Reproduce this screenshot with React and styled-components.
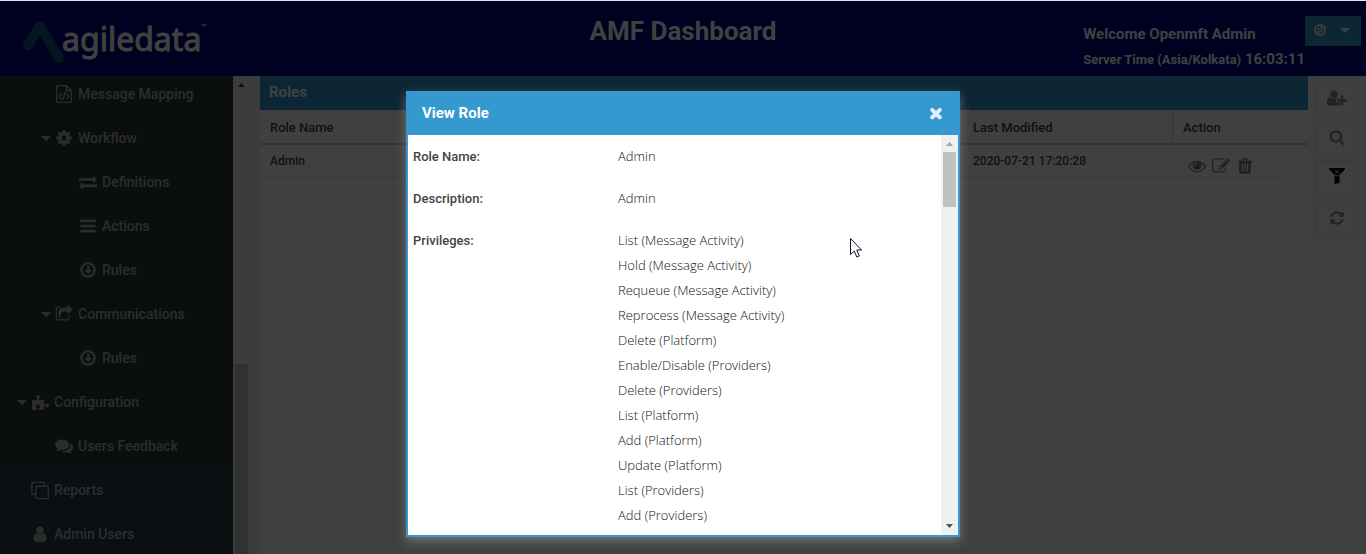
import React from "react";
import styled, { createGlobalStyle } from "styled-components";
import { FaPuzzlePiece } from "react-icons/fa";

const Global = createGlobalStyle`
  * { box-sizing: border-box; }
  body { margin: 0; font-family: Roboto, "Liberation Sans", sans-serif; background: #fff; }
  ul, dl, dd { margin: 0; padding: 0; list-style: none; }
`;

const Page = styled.div`
  display: flex;
  flex-direction: column;
  height: 100vh;
  overflow: hidden;
  position: relative;
  border-top: 1px solid #dde6ea;
`;

const Header = styled.header`
  display: grid;
  grid-template-columns: 1fr auto 1fr;
  flex: none;
  height: 75px;
  background: #000080;
  color: #fff;
`;

const Brand = styled.a`
  display: flex;
  align-items: flex-start;
  padding: 12px 0 0 23px;
  color: #fff;
  text-decoration: none;
  font-family: "Noto Sans", sans-serif;
  font-size: 32px;
  line-height: 52px;
`;

const BrandMark = styled.svg`
  width: 42px;
  height: 44px;
  margin: 7px -3px 0 0;
`;

const BrandName = styled.span`
  -webkit-text-stroke: 1px currentColor;
`;

const Trade = styled.sup`
  font-size: 7px;
  line-height: 27px;
`;

const Title = styled.h1`
  margin: 0;
  font-size: 26px;
  font-weight: 700;
  line-height: 61px;
`;

const Account = styled.div`
  display: flex;
  justify-content: flex-end;
  align-items: flex-start;
  padding: 15px 5px 0 0;
`;

const Greeting = styled.div`
  padding-top: 6px;
  font-size: 15px;
  font-weight: 700;
  line-height: 25px;
`;

const Zone = styled.small`
  font-size: 13px;
`;

const AccountButton = styled.button`
  display: flex;
  align-items: center;
  justify-content: space-between;
  width: 56px;
  height: 30px;
  padding: 0 11px 2px 9px;
  border: 0;
  color: #fff;
  background: #3598cf;
`;

const Main = styled.div`
  display: flex;
  flex: 1;
  min-height: 0;
  background: #f0f0f0;
`;

const Sidebar = styled.nav`
  flex: none;
  width: 233px;
  overflow: hidden;
  background: #28383f;
`;

const Menu = styled.ul`
  margin-top: -4px;
`;

const MenuItem = styled.li`
  background: ${(p) => (p.$alt ? "#2b3e48" : "transparent")};
`;

const MenuLink = styled.a`
  display: flex;
  align-items: center;
  height: 44px;
  padding-left: ${(p) => 17 + p.$level * 24}px;
  font-size: 14px;
  font-weight: 500;
  color: #b0b0b0;
  text-decoration: none;
`;

const CaretSlot = styled.span`
  display: flex;
  width: 14px;
`;

const IconSlot = styled.span`
  display: flex;
  justify-content: center;
  width: 18px;
  margin-right: 5px;
`;

const SideScroll = styled.div`
  display: flex;
  flex-direction: column;
  align-items: center;
  justify-content: space-between;
  flex: none;
  width: 17px;
  padding-top: 7px;
  color: #404040;
`;

const SideThumb = styled.div`
  width: 13px;
  height: 190px;
  background: #c1c1c1;
`;

const Content = styled.main`
  flex: 1;
  min-width: 0;
  margin-left: 10px;
  background: #fff;
`;

const PanelTitle = styled.h2`
  margin: 0;
  padding-left: 9px;
  height: 34px;
  font-size: 15px;
  font-weight: 700;
  line-height: 32px;
  color: #fff;
  background: #3598cf;
`;

const Table = styled.table`
  width: 100%;
  border-collapse: separate;
  border-spacing: 0;
  table-layout: fixed;
  color: #444;
`;

const Th = styled.th`
  width: ${(p) => p.$width || "auto"};
  height: 35px;
  padding: 1px 10px 0;
  text-align: left;
  font-size: 13px;
  font-weight: 500;
  border-bottom: 2px solid #d0d0d0;
  border-left: ${(p) => (p.$divider ? "1px solid #d0d0d0" : "0")};
`;

const Td = styled.td`
  height: 33px;
  padding: 0 10px 1px ${(p) => (p.$inset ? 11 : 10)}px;
  font-size: 12px;
  font-weight: 500;
  border-bottom: ${(p) => (p.$blank ? "0" : "1px solid #ddd")};
`;

const RowActions = styled.div`
  display: flex;
  gap: 6px;
  padding: 10px 0 0 5px;
`;

const IconButton = styled.button`
  display: flex;
  padding: 0;
  border: 0;
  background: none;
  color: #808080;
`;

const Tools = styled.div`
  display: flex;
  flex-direction: column;
  flex: none;
  gap: 6px;
  width: 58px;
  padding: 6px 8px;
  background: #fcfcfc;
`;

const ToolButton = styled.button`
  display: flex;
  align-items: center;
  justify-content: center;
  height: ${(p) => (p.$tall ? 36 : 33)}px;
  padding: 0 0 ${(p) => (p.$tall ? 4 : 1)}px;
  border: 1px solid #e4e4e4;
  background: #fcfcfc;
  color: ${(p) => (p.$tall ? "#000" : "#888")};
`;

const Backdrop = styled.div`
  position: absolute;
  inset: 0;
  display: flex;
  justify-content: center;
  align-items: flex-start;
  padding: 90px 16px 17px;
  background: rgba(0, 0, 0, 0.75);
`;

const Dialog = styled.section`
  display: flex;
  flex-direction: column;
  width: 554px;
  max-height: 100%;
  border: 2px solid #3598cf;
  border-top: 0;
  background: #fff;
  box-shadow: 0 4px 10px rgba(170, 170, 170, 0.5);
`;

const DialogHead = styled.header`
  display: flex;
  align-items: center;
  justify-content: space-between;
  flex: none;
  height: 44px;
  padding: 0 13px 0 14px;
  color: #fff;
  background: #3598cf;
`;

const DialogTitle = styled.h2`
  margin: 0;
  font-size: 15px;
  font-weight: 700;
`;

const CloseButton = styled(IconButton)`
  color: #dceef9;
`;

const DialogBody = styled.div`
  display: flex;
  flex: 1;
  min-height: 0;
`;

const Fields = styled.dl`
  flex: 1;
  padding: 9px 5px 0;
  overflow: hidden;
  color: #444;
`;

const Field = styled.div`
  display: grid;
  grid-template-columns: 205px 1fr;
  margin-bottom: 17px;
  font-size: 13px;
  line-height: 25px;
`;

const Name = styled.dt`
  font-weight: 500;
`;

const Value = styled.dd`
  font-family: "Open Sans", sans-serif;
  font-weight: 300;
  color: #111;
`;

const DialogScroll = styled.div`
  display: flex;
  flex-direction: column;
  align-items: center;
  justify-content: space-between;
  width: 17px;
  padding: 7px 0;
  background: #f0f0f0;
  color: #505050;
`;

const ScrollStart = styled.span`
  display: flex;
  color: #a3a3a3;
`;

const DialogThumb = styled.div`
  width: 13px;
  height: 55px;
  margin: 6px 0 auto;
  background: #c1c1c1;
`;

const Pointer = styled.svg`
  position: absolute;
  left: 849px;
  top: 236px;
  width: 14px;
  height: 22px;
`;

const paths = {
  cog: "M1152 896q0-106-75-181t-181-75-181 75-75 181 75 181 181 75 181-75 75-181zm512-109v222q0 12-8 23t-20 13l-185 28q-19 54-39 91 35 50 107 138 10 12 10 25t-9 23q-27 37-99 108t-94 71q-12 0-26-9l-138-108q-44 23-91 38-16 136-29 186-7 28-36 28h-222q-14 0-24.5-8.5t-11.5-21.5l-28-184q-49-16-90-37l-141 107q-10 9-25 9-14 0-25-11-126-114-165-168-7-10-7-23 0-12 8-23 15-21 51-66.5t54-70.5q-27-50-41-99l-183-27q-13-2-21-12.5t-8-23.5v-222q0-12 8-23t19-13l186-28q14-46 39-92-40-57-107-138-10-12-10-24 0-10 9-23 26-36 98.5-107.5t94.5-71.5q13 0 26 10l138 107q44-23 91-38 16-136 29-186 7-28 36-28h222q14 0 24.5 8.5t11.5 21.5l28 184q49 16 90 37l142-107q9-9 24-9 13 0 25 10 129 119 165 170 7 8 7 22 0 12-8 23-15 21-51 66.5t-54 70.5q26 50 41 98l183 28q13 2 21 12.5t8 23.5z",
  bars: "M1664 1344v128q0 26-19 45t-45 19h-1408q-26 0-45-19t-19-45v-128q0-26 19-45t45-19h1408q26 0 45 19t19 45zm0-512v128q0 26-19 45t-45 19h-1408q-26 0-45-19t-19-45v-128q0-26 19-45t45-19h1408q26 0 45 19t19 45zm0-512v128q0 26-19 45t-45 19h-1408q-26 0-45-19t-19-45v-128q0-26 19-45t45-19h1408q26 0 45 19t19 45z",
  exchange: "M1792 1184v192q0 13-9.5 22.5t-22.5 9.5h-1376v192q0 13-9.5 22.5t-22.5 9.5q-12 0-24-10l-319-320q-9-9-9-22 0-14 9-23l320-320q9-9 23-9 13 0 22.5 9.5t9.5 22.5v192h1376q13 0 22.5 9.5t9.5 22.5zm0-544q0 14-9 23l-320 320q-9 9-23 9-13 0-22.5-9.5t-9.5-22.5v-192h-1376q-13 0-22.5-9.5t-9.5-22.5v-192q0-13 9.5-22.5t22.5-9.5h1376v-192q0-14 9-23t23-9q12 0 24 10l319 319q9 9 9 23z",
  down: "M1280 928q0 14-10 24l-319 319q-10 9-23 9t-23-9l-320-320q-9-9-9-23 0-13 9.5-22.5t22.5-9.5h192v-352q0-13 9.5-22.5t22.5-9.5h192q13 0 22.5 9.5t9.5 22.5v352h192q14 0 23 9t9 23zm160-32q0-148-73-273t-198-198-273-73-273 73-198 198-73 273 73 273 198 198 273 73 273-73 198-198 73-273zm224 0q0 209-103 385.5t-279.5 279.5-385.5 103-385.5-103-279.5-279.5-103-385.5 103-385.5 279.5-279.5 385.5-103 385.5 103 279.5 279.5 103 385.5z",
  share: "M1472 989v259q0 119-84.5 203.5t-203.5 84.5h-832q-119 0-203.5-84.5t-84.5-203.5v-832q0-119 84.5-203.5t203.5-84.5h255q13 0 22.5 9.5t9.5 22.5q0 27-26 32-77 26-133 60-10 4-16 4h-112q-66 0-113 47t-47 113v832q0 66 47 113t113 47h832q66 0 113-47t47-113v-214q0-19 18-29 28-13 54-37 16-16 35-8 21 9 21 29zm237-496l-384 384q-18 19-45 19-12 0-25-5-39-17-39-59v-192h-160q-323 0-438 131-119 137-74 473 3 23-20 34-8 2-12 2-16 0-26-13-10-14-21-31t-39.5-68.5-49.5-99.5-38.5-114-17.5-122q0-49 3.5-91t14-90 28-88 47-81.5 68.5-74 94.5-61.5 124.5-48.5 159.5-30.5 196.5-11h160v-192q0-42 39-59 13-5 25-5 26 0 45 19l384 384q19 19 19 45t-19 45z",
  comments: "M1408 768q0 139-94 257t-256.5 186.5-353.5 68.5q-86 0-176-16-124 88-278 128-36 9-86 16h-3q-11 0-20.5-8t-11.5-21q-1-3-1-6.5t.5-6.5 2-6l2.5-5 3.5-5.5 4-5 4.5-5 4-4.5q5-6 23-25t26-29.5 22.5-29 25-38.5 20.5-44q-124-72-195-177t-71-224q0-139 94-257t256.5-186.5 353.5-68.5 353.5 68.5 256.5 186.5 94 257zm384 256q0 120-71 224.5t-195 176.5q10 24 20.5 44t25 38.5 22.5 29 26 29.5 23 25q1 1 4 4.5t4.5 5 4 5 3.5 5.5l2.5 5 2 6 .5 6.5-1 6.5q-3 14-13 22t-22 7q-50-7-86-16-154-40-278-128-90 16-176 16-271 0-472-132 58 4 88 4 161 0 309-45t264-129q125-92 192-212t67-254q0-77-23-152 129 71 204 178t75 230z",
  user: "M1536 1399q0 109-62.5 187t-150.5 78h-854q-88 0-150.5-78t-62.5-187q0-85 8.5-160.5t31.5-152 58.5-131 94-89 134.5-34.5q131 128 313 128t313-128q76 0 134.5 34.5t94 89 58.5 131 31.5 152 8.5 160.5zm-256-887q0 159-112.5 271.5t-271.5 112.5-271.5-112.5-112.5-271.5 112.5-271.5 271.5-112.5 271.5 112.5 112.5 271.5z",
  times: "M1490 1322q0 40-28 68l-136 136q-28 28-68 28t-68-28l-294-294-294 294q-28 28-68 28t-68-28l-136-136q-28-28-28-68t28-68l294-294-294-294q-28-28-28-68t28-68l136-136q28-28 68-28t68 28l294 294 294-294q28-28 68-28t68 28l136 136q28 28 28 68t-28 68l-294 294 294 294q28 28 28 68z",
  search: "M1216 832q0-185-131.5-316.5t-316.5-131.5-316.5 131.5-131.5 316.5 131.5 316.5 316.5 131.5 316.5-131.5 131.5-316.5zm512 832q0 52-38 90t-90 38q-54 0-90-38l-343-342q-179 124-399 124-143 0-273.5-55.5t-225-150-150-225-55.5-273.5 55.5-273.5 150-225 225-150 273.5-55.5 273.5 55.5 225 150 150 225 55.5 273.5q0 220-124 399l343 343q37 37 37 90z",
  refresh: "M1639 1056q0 5-1 7-64 268-268 434.5t-478 166.5q-146 0-282.5-55t-243.5-157l-129 129q-19 19-45 19t-45-19-19-45v-448q0-26 19-45t45-19h448q26 0 45 19t19 45-19 45l-137 137q71 66 161 102t187 36q134 0 250-65t186-179q11-17 53-117 8-23 30-23h192q13 0 22.5 9.5t9.5 22.5zm25-800v448q0 26-19 45t-45 19h-448q-26 0-45-19t-19-45 19-45l138-138q-148-137-349-137-134 0-250 65t-186 179q-11 17-53 117-8 23-30 23h-199q-13 0-22.5-9.5t-9.5-22.5v-7q65-268 270-434.5t480-166.5q146 0 284 55.5t245 156.5l130-129q19-19 45-19t45 19 19 45z",
  eye: "M1664 960q-152-236-381-353 61 104 61 225 0 185-131.5 316.5t-316.5 131.5-316.5-131.5-131.5-316.5q0-121 61-225-229 117-381 353 133 205 333.5 326.5t434.5 121.5 434.5-121.5 333.5-326.5zm-720-384q0-20-14-34t-34-14q-125 0-214.5 89.5t-89.5 214.5q0 20 14 34t34 14 34-14 14-34q0-86 61-147t147-61q20 0 34-14t14-34zm848 384q0 34-20 69-140 230-376.5 368.5t-499.5 138.5-499.5-139-376.5-368q-20-35-20-69t20-69q140-229 376.5-368t499.5-139 499.5 139 376.5 368q20 35 20 69z",
  edit: "M888 1184l116-116-152-152-116 116v56h96v96h56zm440-720q-16-16-33 1l-350 350q-17 17-1 33t33-1l350-350q17-17 1-33zm80 594v190q0 119-84.5 203.5t-203.5 84.5h-832q-119 0-203.5-84.5t-84.5-203.5v-832q0-119 84.5-203.5t203.5-84.5h832q63 0 117 25 15 7 18 23 3 17-9 29l-49 49q-14 14-32 8-23-6-45-6h-832q-66 0-113 47t-47 113v832q0 66 47 113t113 47h832q66 0 113-47t47-113v-126q0-13 9-22l64-64q15-15 35-7t20 29zm-96-738l288 288-672 672h-288v-288zm444 132l-92 92-288-288 92-92q28-28 68-28t68 28l152 152q28 28 28 68t-28 68z",
  trash: "M704 1376v-704q0-14-9-23t-23-9h-64q-14 0-23 9t-9 23v704q0 14 9 23t23 9h64q14 0 23-9t9-23zm256 0v-704q0-14-9-23t-23-9h-64q-14 0-23 9t-9 23v704q0 14 9 23t23 9h64q14 0 23-9t9-23zm256 0v-704q0-14-9-23t-23-9h-64q-14 0-23 9t-9 23v704q0 14 9 23t23 9h64q14 0 23-9t9-23zm-544-992h448l-48-117q-7-9-17-11h-317q-10 2-17 11zm928 32v64q0 14-9 23t-23 9h-96v948q0 83-47 143.5t-113 60.5h-832q-66 0-113-58.5t-47-141.5v-952h-96q-14 0-23-9t-9-23v-64q0-14 9-23t23-9h309l70-167q15-37 54-63t79-26h320q40 0 79 26t54 63l70 167h309q14 0 23 9t9 23z",
  userPlus: "M704 896q-159 0-271.5-112.5t-112.5-271.5 112.5-271.5 271.5-112.5 271.5 112.5 112.5 271.5-112.5 271.5-271.5 112.5zm960 128h352q13 0 22.5 9.5t9.5 22.5v192q0 13-9.5 22.5t-22.5 9.5h-352v352q0 13-9.5 22.5t-22.5 9.5h-192q-13 0-22.5-9.5t-9.5-22.5v-352h-352q-13 0-22.5-9.5t-9.5-22.5v-192q0-13 9.5-22.5t22.5-9.5h352v-352q0-13 9.5-22.5t22.5-9.5h192q13 0 22.5 9.5t9.5 22.5v352zm-736 224q0 52 38 90t90 38h256v238q-68 50-171 50h-874q-121 0-194-69t-73-190q0-53 3.5-103.5t14-109 26.5-108.5 43-97.5 62-81 85.5-53.5 111.5-20q19 0 39 17 79 61 154.5 91.5t164.5 30.5 164.5-30.5 154.5-91.5q20-17 39-17 132 0 217 96h-223q-52 0-90 38t-38 90v192z",
};

function Icon({ name, size = 18, wide }) {
  return (
    <svg width={wide ? 20 : size} height={size} viewBox={`0 0 ${wide ? 2048 : 1792} 1792`} fill="currentColor" aria-hidden="true">
      <path d={paths[name]} />
    </svg>
  );
}

function Caret({ up, small }) {
  return (
    <svg width={small ? 7 : 10} height={small ? 4 : 5} viewBox="0 0 10 5" preserveAspectRatio="none" fill="currentColor" aria-hidden="true">
      <path d={up ? "M0 5L5 0L10 5z" : "M0 0L5 5L10 0z"} />
    </svg>
  );
}

function FileCodeIcon() {
  return (
    <svg width="16" height="18" viewBox="0 0 16 18" fill="none" stroke="currentColor" strokeWidth="1.3" strokeLinejoin="round" aria-hidden="true">
      <path d="M1.7 .7H10.5L15.3 5.5V16.3Q15.3 17.3 14.3 17.3H1.7Q.7 17.3 .7 16.3V1.7Q.7 .7 1.7 .7z" />
      <path d="M10.3 1V5.7H15" />
      <path d="M5.4 8.3L3.2 11.2L5.4 14.1M10.6 8.3L12.8 11.2L10.6 14.1M8.8 7.3L7.2 14.8" strokeLinecap="round" />
    </svg>
  );
}

function CopyIcon() {
  return (
    <svg width="19" height="19" viewBox="0 0 19 19" fill="none" stroke="currentColor" strokeWidth="1.4" aria-hidden="true">
      <rect x="5.2" y="5" width="13" height="13" rx="1.2" />
      <path d="M5 13.6H2Q1 13.6 1 12.6V2Q1 1 2 1H13Q14 1 14 2V5" />
    </svg>
  );
}

function CompassIcon() {
  return (
    <svg width="12" height="12" viewBox="0 0 12 12" fill="none" stroke="currentColor" aria-hidden="true">
      <circle cx="6" cy="6" r="5.1" strokeWidth="1.6" />
      <path d="M4.1 5.2L8 3.2V6.8L4.1 8.8z" strokeWidth="1.1" />
    </svg>
  );
}

function FilterIcon() {
  return (
    <svg width="16" height="16" viewBox="0 0 16 16" aria-hidden="true">
      <path d="M0 0H16V1L10.5 7V15L5.5 16V7L0 1z" fill="currentColor" />
      <path d="M6 1.8L10 5.8M10 1.8L6 5.8M5.5 7.7H10.5" stroke="#e0e0e0" strokeWidth="1" />
    </svg>
  );
}

const fa = (name) => <Icon name={name} />;

const menu = [
  { label: "Message Mapping", level: 1, icon: <FileCodeIcon /> },
  { label: "Workflow", level: 1, open: true, icon: fa("cog") },
  { label: "Definitions", level: 2, icon: fa("exchange") },
  { label: "Actions", level: 2, icon: fa("bars") },
  { label: "Rules", level: 2, icon: fa("down") },
  { label: "Communications", level: 1, open: true, icon: fa("share") },
  { label: "Rules", level: 2, icon: fa("down") },
  { label: "Configuration", level: 0, open: true, icon: <FaPuzzlePiece size={17} /> },
  { label: "Users Feedback", level: 1, icon: fa("comments") },
  { label: "Reports", level: 0, alt: true, icon: <CopyIcon /> },
  { label: "Admin Users", level: 0, alt: true, icon: fa("user") },
];

const privileges = [
  "List (Message Activity)",
  "Hold (Message Activity)",
  "Requeue (Message Activity)",
  "Reprocess (Message Activity)",
  "Delete (Platform)",
  "Enable/Disable (Providers)",
  "Delete (Providers)",
  "List (Platform)",
  "Add (Platform)",
  "Update (Platform)",
  "List (Providers)",
  "Add (Providers)",
];

export default function App() {
  return (
    <Page>
      <Global />
      <Header>
        <Brand href="#">
          <BrandMark viewBox="0 0 42 44" fill="none" strokeLinecap="round" strokeLinejoin="round" strokeWidth="10" aria-hidden="true">
            <path d="M5 25L17 6L36 38" stroke="#145a80" />
          </BrandMark>
          <BrandName>agiledata</BrandName>
          <Trade>™</Trade>
        </Brand>
        <Title>AMF Dashboard</Title>
        <Account>
          <Greeting>
            <div>Welcome Openmft Admin</div>
            <div><Zone>Server Time (Asia/Kolkata)</Zone> 16:03:11</div>
          </Greeting>
          <AccountButton aria-label="Account menu">
            <CompassIcon />
            <Caret />
          </AccountButton>
        </Account>
      </Header>
      <Main>
        <Sidebar>
          <Menu>
            {menu.map((m, i) => (
              <MenuItem key={i} $alt={m.alt}>
                <MenuLink href="#" $level={m.level}>
                  <CaretSlot>{m.open && <Caret />}</CaretSlot>
                  <IconSlot>{m.icon}</IconSlot>
                  {m.label}
                </MenuLink>
              </MenuItem>
            ))}
          </Menu>
        </Sidebar>
        <SideScroll>
          <Caret up small />
          <SideThumb />
        </SideScroll>
        <Content>
          <PanelTitle>Roles</PanelTitle>
          <Table>
            <thead>
              <tr>
                <Th>Role Name</Th>
                <Th $divider $width="210px">Last Modified</Th>
                <Th $divider $width="108px">Action</Th>
                <Th $width="28px" aria-hidden="true" />
              </tr>
            </thead>
            <tbody>
              <tr>
                <Td>Admin</Td>
                <Td $inset>2020-07-21 17:20:28</Td>
                <Td $inset>
                  <RowActions>
                    <IconButton aria-label="View"><Icon name="eye" /></IconButton>
                    <IconButton aria-label="Edit"><Icon name="edit" /></IconButton>
                    <IconButton aria-label="Delete"><Icon name="trash" /></IconButton>
                  </RowActions>
                </Td>
                <Td $blank />
              </tr>
            </tbody>
          </Table>
        </Content>
        <Tools>
          <ToolButton aria-label="Add role"><Icon name="userPlus" wide /></ToolButton>
          <ToolButton aria-label="Search"><Icon name="search" size={16} /></ToolButton>
          <ToolButton aria-label="Clear filter" $tall><FilterIcon /></ToolButton>
          <ToolButton aria-label="Refresh"><Icon name="refresh" size={16} /></ToolButton>
        </Tools>
      </Main>
      <Backdrop>
        <Dialog role="dialog" aria-labelledby="dialog-title">
          <DialogHead>
            <DialogTitle id="dialog-title">View Role</DialogTitle>
            <CloseButton aria-label="Close"><Icon name="times" /></CloseButton>
          </DialogHead>
          <DialogBody>
            <Fields>
              <Field><Name>Role Name:</Name><Value>Admin</Value></Field>
              <Field><Name>Description:</Name><Value>Admin</Value></Field>
              <Field>
                <Name>Privileges:</Name>
                <Value>
                  <ul>{privileges.map((p) => <li key={p}>{p}</li>)}</ul>
                </Value>
              </Field>
            </Fields>
            <DialogScroll>
              <ScrollStart><Caret up small /></ScrollStart>
              <DialogThumb />
              <Caret small />
            </DialogScroll>
          </DialogBody>
        </Dialog>
        <Pointer viewBox="0 0 14 22" aria-hidden="true">
          <path d="M1.5 1.5V17.5L5.2 14L7.8 20L10.3 19L7.8 13H12.5z" fill="#fff" stroke="#112" />
        </Pointer>
      </Backdrop>
    </Page>
  );
}
